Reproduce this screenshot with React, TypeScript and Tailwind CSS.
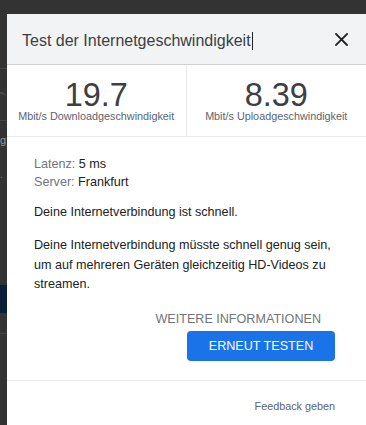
export default function App() {
  return (
    <div className="w-[366px] h-[425px] bg-[#333333] flex flex-col overflow-hidden font-['Liberation_Sans',Arial,sans-serif]">
      {/* top strip of the page behind */}
      <div className="h-[14px] shrink-0" />

      <div className="flex flex-1 min-h-0">
        {/* page behind, cut off on the left */}
        <div className="w-[7px] shrink-0 flex flex-col overflow-hidden">
          <div className="h-[54px] shrink-0" />
          <div className="h-[52px] shrink-0 border-t border-[#444444] flex items-center">
            <div className="w-[6px] h-[5px] border-t-2 border-[#4a4a4a] rounded-tr-full" />
          </div>
          <div className="h-[50px] shrink-0 border-t border-[#444444] pt-[12px] text-[11px] leading-[14px] text-[#9a9a9a]">
            g
          </div>
          <div className="h-[115px] shrink-0 text-[10px] leading-[10px] text-[#777777]">.</div>
          <div className="h-[28px] shrink-0 bg-[#0c1e37]" />
          <div className="h-[20px] shrink-0" />
          <div className="flex-1 border-t border-[#444444]" />
        </div>

        {/* dialog */}
        <div className="flex-1 bg-white flex flex-col">
          <div className="h-[51px] shrink-0 bg-[#f1f3f4] border-b border-[#cfcfcf] flex items-center justify-between pl-[15px] pr-[18px]">
            <div className="pt-[4px] text-[16px] text-[#3c4043] flex items-center">
              <span>Test der Internetgeschwindigkeit</span>
              <span className="inline-block w-px h-[18px] bg-[#202124] ml-[1px]" />
            </div>
            <svg width="13" height="13" viewBox="0 0 13 13" className="text-[#202124]">
              <path d="M1 1L12 12M12 1L1 12" stroke="currentColor" strokeWidth="1.8" strokeLinecap="square" />
            </svg>
          </div>

          <div className="h-[72px] shrink-0 grid grid-cols-2 border-b border-[#ebebeb]">
            <div className="flex flex-col items-center pt-[13.6px] border-r border-[#e8eaed]">
              <div className="text-[32.4px] leading-none text-[#3c4043]">19.7</div>
              <div className="text-[10.8px] leading-none text-[#5b6472]">Mbit/s Downloadgeschwindigkeit</div>
            </div>
            <div className="flex flex-col items-center pt-[13.6px]">
              <div className="text-[32.4px] leading-none text-[#3c4043]">8.39</div>
              <div className="text-[10.8px] leading-none text-[#5b6472]">Mbit/s Uploadgeschwindigkeit</div>
            </div>
          </div>

          <div className="shrink-0 pl-[27px] pr-[31px] pt-[18px] text-[12.6px] text-[#202124]">
            <div className="leading-[18px]">
              <div>
                <span className="text-[#70757a]">Latenz:</span> 5 ms
              </div>
              <div>
                <span className="text-[#70757a]">Server:</span> Frankfurt
              </div>
            </div>
            <p className="mt-[11.6px] leading-[19.5px]">Deine Internetverbindung ist schnell.</p>
            <p className="mt-[14px] leading-[19.5px]">
              Deine Internetverbindung müsste schnell genug sein, um auf mehreren Geräten gleichzeitig HD-Videos zu streamen.
            </p>
            <div className="mt-[15.6px] flex flex-col items-end">
              <div className="mr-[14px] leading-[18px] text-[#70757a]">WEITERE INFORMATIONEN</div>
              <button className="mt-[3px] h-[30px] w-[148px] rounded-[4px] bg-[#1a73e8] text-white flex items-center justify-center">
                ERNEUT TESTEN
              </button>
            </div>
          </div>

          <div className="mt-[19px] border-t border-[#e8eaed] flex-1 flex justify-end pr-[31px] pt-[16px]">
            <div className="text-[10.8px] leading-[18px] text-[#5b6472]">Feedback geben</div>
          </div>
        </div>
      </div>
    </div>
  );
}
